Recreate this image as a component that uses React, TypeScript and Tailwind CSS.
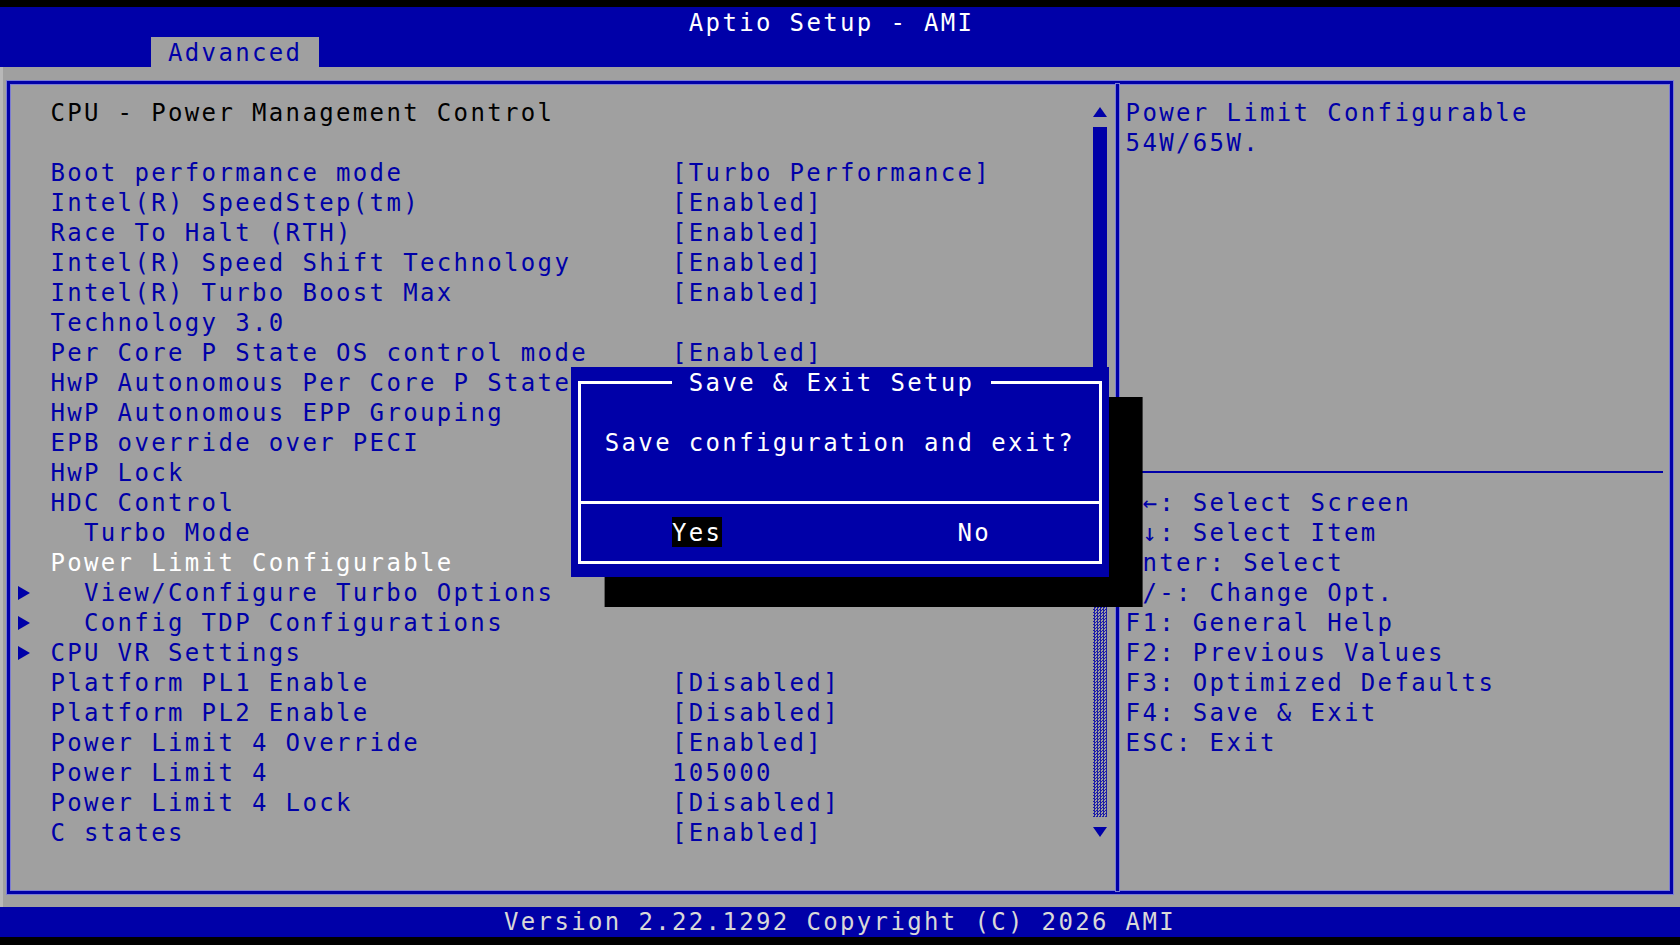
import React from 'react';

type Row = {
  label?: string;
  value?: string;
  indent?: boolean;
  sub?: boolean;
  tone?: 'title' | 'sel';
};

// values of rows that sit under the popup are not drawn
const rows: Row[] = [
  { label: 'CPU - Power Management Control', tone: 'title' },
  {},
  { label: 'Boot performance mode', value: '[Turbo Performance]' },
  { label: 'Intel(R) SpeedStep(tm)', value: '[Enabled]' },
  { label: 'Race To Halt (RTH)', value: '[Enabled]' },
  { label: 'Intel(R) Speed Shift Technology', value: '[Enabled]' },
  { label: 'Intel(R) Turbo Boost Max', value: '[Enabled]' },
  { label: 'Technology 3.0' },
  { label: 'Per Core P State OS control mode', value: '[Enabled]' },
  { label: 'HwP Autonomous Per Core P State' },
  { label: 'HwP Autonomous EPP Grouping' },
  { label: 'EPB override over PECI' },
  { label: 'HwP Lock' },
  { label: 'HDC Control' },
  { label: 'Turbo Mode', indent: true },
  { label: 'Power Limit Configurable', tone: 'sel' },
  { label: 'View/Configure Turbo Options', indent: true, sub: true },
  { label: 'Config TDP Configurations', indent: true, sub: true },
  { label: 'CPU VR Settings', sub: true },
  { label: 'Platform PL1 Enable', value: '[Disabled]' },
  { label: 'Platform PL2 Enable', value: '[Disabled]' },
  { label: 'Power Limit 4 Override', value: '[Enabled]' },
  { label: 'Power Limit 4', value: '105000' },
  { label: 'Power Limit 4 Lock', value: '[Disabled]' },
  { label: 'C states', value: '[Enabled]' },
];

const help = [
  '→←: Select Screen',
  '↑↓: Select Item',
  'Enter: Select',
  '+/-: Change Opt.',
  'F1: General Help',
  'F2: Previous Values',
  'F3: Optimized Defaults',
  'F4: Save & Exit',
  'ESC: Exit',
];

function SubArrow() {
  return (
    <svg width="12" height="14" viewBox="0 0 12 14" className="ml-[1px]">
      <path d="M0 0L12 7L0 14Z" fill="#0000a8" />
    </svg>
  );
}

function ListRow({ row }: { row: Row }) {
  const color =
    row.tone === 'title' ? 'text-black' : row.tone === 'sel' ? 'text-white' : 'text-[#0000a8]';
  return (
    <div className={`flex h-[30px] pt-[1px] ${color}`}>
      <div className="w-[33.6px] flex items-center">{row.sub && <SubArrow />}</div>
      <div className={`w-[621.6px] ${row.indent ? 'pl-[33.6px]' : ''}`}>{row.label}</div>
      <div className="text-[#0000a8]">{row.value}</div>
    </div>
  );
}

function ScrollBar() {
  return (
    <div className="w-[16.8px] pt-[13.5px] flex flex-col items-center">
      {/* up arrow */}
      <div className="h-[30px] flex items-center">
        <svg width="14" height="10" viewBox="0 0 14 10">
          <path d="M7 0L14 10H0Z" fill="#0000a8" />
        </svg>
      </div>
      {/* thumb */}
      <div className="h-[360px] w-[14px] bg-[#0000a8]" />
      {/* dotted track */}
      <div className="h-[330px] w-[14px] bg-[repeating-conic-gradient(#1c1ca8_0_25%,#a0a0a0_0_50%)] bg-[length:3px_3px]" />
      {/* down arrow */}
      <div className="h-[30px] flex items-center">
        <svg width="14" height="10" viewBox="0 0 14 10">
          <path d="M0 0H14L7 10Z" fill="#0000a8" />
        </svg>
      </div>
    </div>
  );
}

function SaveDialog() {
  return (
    <div className="absolute left-[571.2px] top-[367px] w-[537.6px] h-[210px] bg-[#0000a8] px-[6.9px] py-[13.5px] text-white shadow-[33.6px_30px_0_0_#000]">
      <div className="h-full border-[3px] border-white flex flex-col">
        <div className="pt-[44.5px] pl-[23.7px] h-[73.5px]">Save configuration and exit?</div>
        <div className="h-[43.5px]" />
        <div className="h-[3px] bg-white" />
        <div className="h-[13.5px]" />
        <div className="flex h-[30px]">
          <div className="ml-[90.9px] w-[50.4px] bg-black pt-[1px]">Yes</div>
          <div className="ml-[235.2px] pt-[1px]">No</div>
        </div>
      </div>
      {/* title sits on the top border */}
      <div className="absolute left-[100.8px] top-0 h-[30px] pt-[1px] bg-[#0000a8]">{' Save & Exit Setup '}</div>
    </div>
  );
}

export default function App() {
  return (
    <div className="relative w-[1680px] h-[945px] overflow-hidden bg-black pt-[7px] font-['DejaVu_Sans_Mono',monospace] text-[24px] leading-[30px] tracking-[2.351px] whitespace-pre">
      {/* header */}
      <header className="h-[60px] bg-[#0000a8]">
        <div className="h-[30px] pt-[1px] pl-[688.8px] text-white">Aptio Setup - AMI</div>
        <div className="h-[30px] pl-[151.2px] flex">
          <div className="w-[168px] bg-[#a0a0a0] pt-[1px] pl-[16.8px] text-[#0000a8]">Advanced</div>
        </div>
      </header>

      {/* body */}
      <main className="h-[840px] bg-[#a0a0a0] border-l-[3px] border-[#b8b8b8] pl-[3.9px] pr-[6.9px] py-[13.5px]">
        <div className="h-full flex border-[3px] border-[#0000a8] shadow-[0_0_0_1px_#7c7cd4,inset_0_0_0_1px_#7c7cd4]">
          <section className="w-[1105.8px] flex pl-[6.9px] pr-[6.9px]">
            <div className="flex-1 pt-[13.5px]">
              {rows.map((r, i) => (
                <ListRow key={i} row={r} />
              ))}
            </div>
            <ScrollBar />
          </section>

          <div className="w-[3px] bg-[#0000a8] shadow-[0_0_0_1px_#7c7cd4]" />

          <aside className="flex-1 pl-[6.9px] pr-[6.9px] pt-[14.5px] text-[#0000a8]">
            <div className="h-[30px]">Power Limit Configurable</div>
            <div className="h-[30px]">54W/65W.</div>
            <div className="h-[300px]" />
            <div className="h-[30px] flex items-center -mt-[1px]">
              <div className="h-[2px] w-full bg-[#0000a8]" />
            </div>
            <div className="mt-[1px]">
              {help.map((h) => (
                <div key={h} className="h-[30px]">
                  {h}
                </div>
              ))}
            </div>
          </aside>
        </div>
      </main>

      {/* footer */}
      <footer className="h-[30px] bg-[#0000a8] pl-[504px] text-[#d8d8d8]">
        Version 2.22.1292 Copyright (C) 2026 AMI
      </footer>

      <SaveDialog />
    </div>
  );
}
